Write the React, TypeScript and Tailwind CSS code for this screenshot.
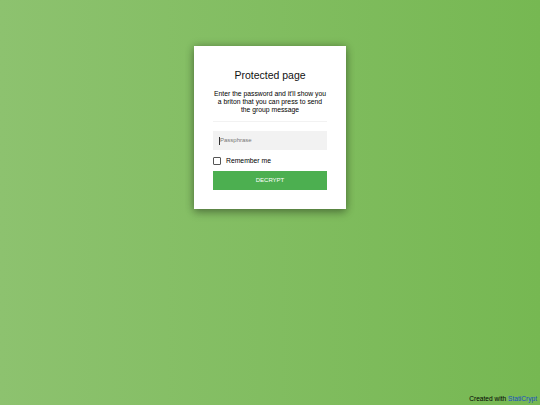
export default function App() {
  return (
    <div
      className="relative h-[405px] w-[540px] overflow-hidden bg-[linear-gradient(to_left,#76b852,#8dc26f)]"
      style={{ fontFamily: '"Liberation Sans", Arial, sans-serif' }}
    >
      <div className="flex justify-center pt-[46px]">
        <div className="flex w-[152px] flex-col bg-white px-[19px] pt-[22px] pb-[19px] text-center shadow-[0_0_8px_rgba(0,0,0,0.25),0_4px_8px_rgba(0,0,0,0.25)]">
          <h1 className="text-[10.5px] leading-[14px] text-[#111]">Protected page</h1>
          <p className="mt-[8px] text-[6.8px] leading-[8px] text-black">
            Enter the password and it'll show you a briton that you can press to send the group message
          </p>
          <div className="mt-[7px] h-px bg-[#f2f2f2]" />
          <div className="mt-[9px] flex h-[19px] items-center bg-[#f2f2f2] px-[6px] text-left">
            <span className="h-[8px] w-px bg-[#333]" />
            <span className="text-[6px] text-[#777]">Passphrase</span>
          </div>
          <label className="mt-[6px] flex items-center gap-[5px] text-left">
            <span className="h-[8px] w-[8px] rounded-[1px] border border-[#555] bg-white" />
            <span className="text-[6.8px] text-black">Remember me</span>
          </label>
          <button className="mt-[5px] flex h-[19px] items-center justify-center bg-[#4caf50] text-[6px] text-white">
            DECRYPT
          </button>
        </div>
      </div>
      <div className="absolute right-[3px] bottom-[1px] text-[6.6px] text-black">
        Created with <span className="text-[#1a4bc4]">StatiCrypt</span>
      </div>
    </div>
  );
}
